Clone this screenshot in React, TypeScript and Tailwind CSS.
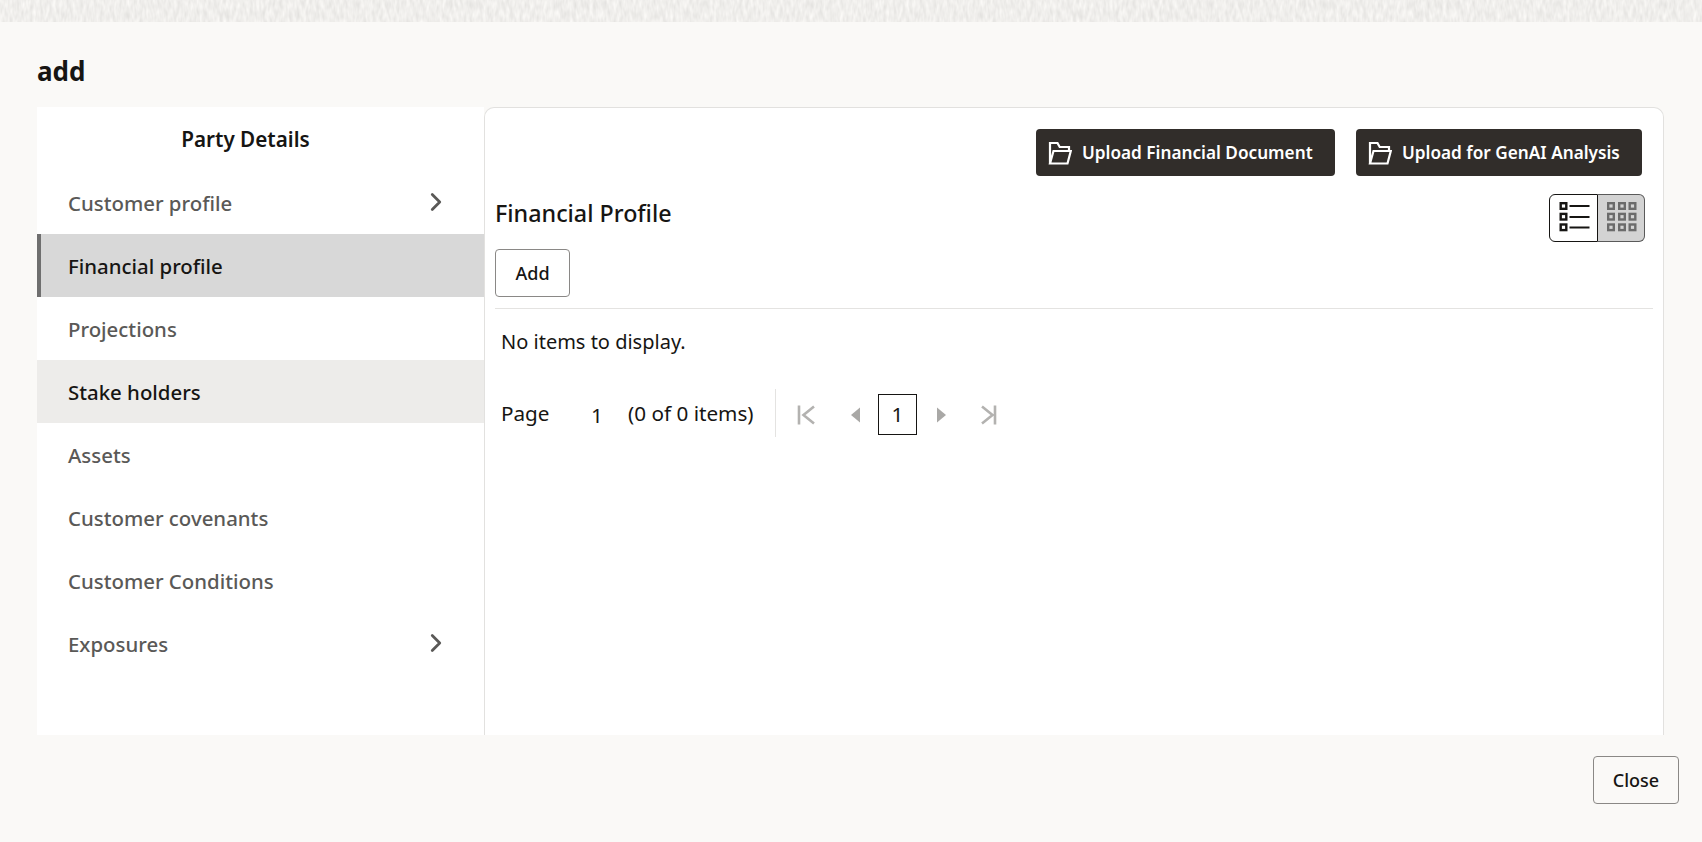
import { ChevronRight } from "lucide-react"

const navItems = [
  { label: "Customer profile", chevron: true },
  { label: "Financial profile", selected: true },
  { label: "Projections" },
  { label: "Stake holders", hovered: true },
  { label: "Assets" },
  { label: "Customer covenants" },
  { label: "Customer Conditions" },
  { label: "Exposures", chevron: true },
]

function TextureStrip() {
  return (
    <svg width="1702" height="22" className="block shrink-0">
      <filter id="strip-noise" x="0" y="0" width="100%" height="100%" colorInterpolationFilters="sRGB">
        <feTurbulence type="fractalNoise" baseFrequency="0.3 0.1" numOctaves="2" seed="7" />
        <feColorMatrix
          type="matrix"
          values="0.13 0 0 0 0.875  0.13 0 0 0 0.87  0.13 0 0 0 0.86  0 0 0 0 1"
        />
      </filter>
      <rect width="1702" height="22" filter="url(#strip-noise)" />
    </svg>
  )
}

function FolderIcon() {
  return (
    <svg width="24" height="24" viewBox="0 0 24 24" fill="none" stroke="#fff" strokeWidth="2.2" className="shrink-0">
      <path d="M2 22.5V2h7.5l2.2 4H21v4" />
      <path d="M2 22.5h17.5l3.3-12.5H5.5L2 22.5z" />
    </svg>
  )
}

function ListIcon() {
  const rows = [
    { y: 0, line: 3 },
    { y: 10.7, line: 14 },
    { y: 21.3, line: 24.5 },
  ]
  return (
    <svg width="32" height="32" viewBox="0 0 32 32">
      {rows.map((row) => (
        <g key={row.y}>
          <rect x="2.7" y={row.y + 1.2} width="5.6" height="5.6" fill="none" stroke="#161513" strokeWidth="2.4" />
          <rect x="11.5" y={row.line} width="20" height="2" fill="#161513" />
        </g>
      ))}
    </svg>
  )
}

function GridIcon() {
  const cols = [3.2, 14.2, 24.7]
  const rows = [1.2, 11.9, 22.5]
  return (
    <svg width="32" height="32" viewBox="0 0 32 32">
      {rows.map((y) =>
        cols.map((x) => (
          <rect key={`${x}-${y}`} x={x} y={y} width="5.6" height="5.6" fill="none" stroke="#6b6b6b" strokeWidth="2.4" />
        )),
      )}
    </svg>
  )
}

function PagerIcon({ kind }: { kind: "first" | "prev" | "next" | "last" }) {
  const paths = {
    first: <path d="M2 2.5v19M17 3.5L6.5 12 17 20.5" fill="none" strokeWidth="2.6" />,
    prev: <path d="M14 4.5v15L5 12z" stroke="none" />,
    next: <path d="M10 4.5v15l9-7.5z" stroke="none" />,
    last: <path d="M20 2.5v19M7 3.5L17.5 12 7 20.5" fill="none" strokeWidth="2.6" />,
  }
  return (
    <svg width="24" height="24" viewBox="0 0 24 24" fill="#a9a8a6" stroke="#b3b2b0">
      {paths[kind]}
    </svg>
  )
}

export default function App() {
  return (
    <div className="w-[1702px] h-[842px] flex flex-col overflow-hidden bg-[#faf9f7] font-['Noto_Sans',sans-serif] text-[#161513]">
      <TextureStrip />

      <div className="flex-1 flex flex-col min-h-0 pl-[37px]">
        <h1 className="h-[85px] shrink-0 pt-[31px] text-[26px] leading-[36px] font-bold">add</h1>

        <div className="h-[628px] shrink-0 flex">
          <div className="w-[447px] bg-white">
            <div className="h-[64px] pt-[18px] pr-[30px] text-center text-[20.7px] leading-[28px] font-semibold">Party Details</div>
            <div>
              {navItems.map((item) => (
                <div
                  key={item.label}
                  className={`h-[63px] flex items-center justify-between pt-[2px] pr-[41px] text-[20.4px] ${
                    item.selected
                      ? "bg-[#d8d8d8] border-l-4 border-[#6f6f6f] pl-[27px] text-[#161513] font-medium"
                      : item.hovered
                        ? "bg-[#edecea] pl-[31px] text-[#161513] font-medium"
                        : "pl-[31px] text-[#5a5957] font-medium"
                  }`}
                >
                  <span>{item.label}</span>
                  {item.chevron && <ChevronRight className="w-[30px] h-[30px] -mr-[8px] -mt-[3px] text-[#5a5957]" strokeWidth={2.2} />}
                </div>
              ))}
            </div>
          </div>

          <div className="w-[1180px] bg-white border border-b-0 border-[#e2e1df] rounded-t-[10px] px-[10px]">
            <div className="flex justify-end gap-[21px] pt-[21px] pr-[11px]">
              <button className="h-[47px] w-[299px] flex items-center gap-[10px] pl-[12px] rounded-[4px] bg-[#312d2a] text-white text-[17.2px] font-semibold">
                <FolderIcon />
                Upload Financial Document
              </button>
              <button className="h-[47px] w-[286px] flex items-center gap-[10px] pl-[12px] rounded-[4px] bg-[#312d2a] text-white text-[17.2px] font-semibold">
                <FolderIcon />
                Upload for GenAI Analysis
              </button>
            </div>

            <div className="flex items-start justify-between pt-[18px] pr-[8px]">
              <div className="text-[23.3px] leading-[38px] font-medium">Financial Profile</div>
              <div className="flex h-[48px] w-[96px]">
                <div className="w-[49px] flex items-center justify-center bg-white border border-[#161513] rounded-l-[6px]">
                  <ListIcon />
                </div>
                <div className="w-[47px] flex items-center justify-center bg-[#d3d3d3] border-y border-r border-[#5a5a5a] rounded-r-[6px]">
                  <GridIcon />
                </div>
              </div>
            </div>

            <div className="mt-[7px] pb-[11px] border-b border-[#e4e3e1]">
              <button className="h-[48px] w-[75px] rounded-[4px] border border-[#8a8886] text-[18px] font-medium bg-white">Add</button>
            </div>

            <div className="pl-[6px] pt-[19px] text-[20px] leading-[28px]">No items to display.</div>

            <div className="flex items-center h-[48px] mt-[33px] pl-[6px] text-[20.7px]">
              <span className="w-[90px] mt-[1px]">Page</span>
              <span className="w-[37px] mt-[5px]">1</span>
              <span className="w-[147px] mt-[1px]">(0 of 0 items)</span>
              <div className="h-full border-l border-[#e4e3e1]" />
              <div className="flex items-center ml-[21px] mt-[3px]">
                <PagerIcon kind="first" />
                <span className="ml-[25px]"><PagerIcon kind="prev" /></span>
                <span className="ml-[8px] w-[39px] h-[41px] flex items-center justify-center border border-[#161513]">1</span>
                <span className="ml-[10px]"><PagerIcon kind="next" /></span>
                <span className="ml-[24px]"><PagerIcon kind="last" /></span>
              </div>
            </div>
          </div>
        </div>

        <div className="flex justify-end pt-[21px] pr-[23px]">
          <button className="h-[48px] w-[86px] rounded-[4px] border border-[#8a8886] text-[18px] font-medium">Close</button>
        </div>
      </div>
    </div>
  )
}
